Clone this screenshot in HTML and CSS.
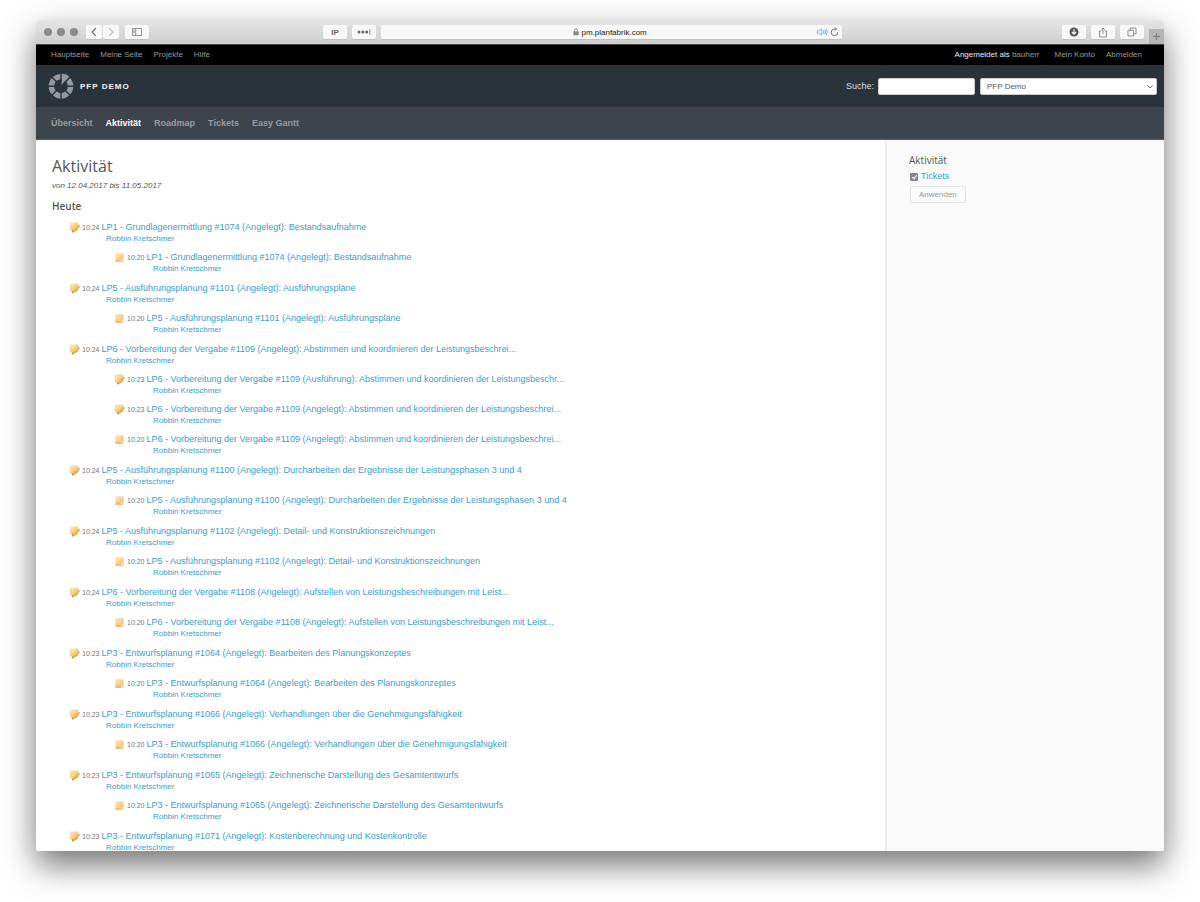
FILE: index.html
```
<!DOCTYPE html>
<html lang="de">
<head>
    <meta charset="UTF-8">
    <meta name="viewport" content="width=device-width, initial-scale=1.0">
    <title>Aktivität - PFP Demo</title>
    <link rel="stylesheet" href="styles.css">
</head>
<body>
    <svg class="sprite" aria-hidden="true">
        <linearGradient id="note-fill" x1="0" y1="0" x2="1" y2="1">
            <stop offset="0" stop-color="#fdebc0"/>
            <stop offset="1" stop-color="#f2b85a"/>
        </linearGradient>
        <symbol id="icon-note" viewBox="0 0 11 11">
            <rect x="1.2" y="1.2" width="8.4" height="8.6" rx="0.8" fill="url(#note-fill)"/>
            <path d="M1.4 8.4h5.6v1.2H1.4z" fill="#eeae5a"/>
            <path d="M7 9.6V7.6l2.4-.4z" fill="#fdf0d8"/>
        </symbol>
        <symbol id="icon-note-edit" viewBox="0 0 11 11">
            <path d="M.6.6h8.6v6.6L7.6 8.8H2L.6 7.2z" fill="url(#note-fill)"/>
            <path d="M9.4 2.6l1.2 1.2-5.2 5.4-2.4.6.7-2.2z" fill="#f0c04e"/>
            <path d="M10.6 4L5.6 9.3l-2.4.8" fill="none" stroke="#c48e4e" stroke-width=".8"/>
            <path d="M3 8l.2 2.4 1.8-.8z" fill="#c08a50"/>
            <path d="M9.2 2.6l1.4 1.4" stroke="#e8b29a" stroke-width="1"/>
        </symbol>
    </svg>

    <div class="window">
        <div class="toolbar">
            <div class="lights"><span></span><span></span><span></span></div>
            <div class="history">
                <button class="tool" aria-label="Zurück"><svg width="8" height="10" viewBox="0 0 8 10"><path d="M5.8 1.2L2 5l3.8 3.8" fill="none" stroke="#666" stroke-width="1.1"/></svg></button>
                <button class="tool" aria-label="Vorwärts"><svg width="8" height="10" viewBox="0 0 8 10"><path d="M2.2 1.2L6 5 2.2 8.8" fill="none" stroke="#bbb" stroke-width="1.1"/></svg></button>
            </div>
            <button class="tool tool-wide" aria-label="Seitenleiste"><svg width="10" height="8" viewBox="0 0 10 8"><path d="M.5.5h9v7h-9zM3.7.5v7M1.3 2h1.4M1.3 3.4h1.4M1.3 4.8h1.4" fill="none" stroke="#777" stroke-width=".8"/></svg></button>
            <div class="extensions">
                <button class="tool tool-wide">IP</button>
                <button class="tool tool-wide" aria-label="Passwort"><svg width="14" height="8" viewBox="0 0 14 8"><circle cx="2" cy="4" r="1.5" fill="#666"/><circle cx="5.9" cy="4" r="1.5" fill="#666"/><circle cx="9.8" cy="4" r="1.5" fill="#666"/><path d="M12.8 1v6" stroke="#777" stroke-width=".8"/></svg></button>
            </div>
            <div class="address">
                <span class="url"><svg width="6" height="8" viewBox="0 0 6 8"><rect x=".3" y="3.2" width="5.4" height="4" rx=".5" fill="#888"/><path d="M1.5 3.4V2.3a1.5 1.5 0 013 0v1.1" fill="none" stroke="#888" stroke-width=".9"/></svg> pm.planfabrik.com</span>
                <svg width="11" height="8" viewBox="0 0 11 8"><path d="M.6 2.8h1.6L4.8.9v6.2L2.2 5.2H.6z" fill="none" stroke="#5aa5f0" stroke-width=".8"/><path d="M6.3 2.5q1 1.5 0 3M7.8 1.7q1.6 2.3 0 4.6M9.2.9q2.2 3.1 0 6.2" fill="none" stroke="#5aa5f0" stroke-width=".8"/></svg>
                <svg width="9" height="10" viewBox="0 0 9 10"><path d="M7.8 5.2A3.3 3.3 0 114.5 2H6" fill="none" stroke="#666" stroke-width=".9"/><path d="M4.6.2L6.6 2 4.6 3.8" fill="none" stroke="#666" stroke-width=".9"/></svg>
            </div>
            <div class="actions">
                <button class="tool tool-wide" aria-label="Downloads"><svg width="10" height="10" viewBox="0 0 10 10"><circle cx="5" cy="5" r="4.5" fill="#555"/><path d="M5 2.2v4.6M2.9 5L5 7.2 7.1 5" fill="none" stroke="#fff" stroke-width="1.1"/></svg></button>
                <button class="tool tool-wide" aria-label="Teilen"><svg width="10" height="11" viewBox="0 0 10 11"><path d="M3.4 4H1.5v6h7V4H6.6M5 7V1M3.2 2.8L5 1l1.8 1.8" fill="none" stroke="#777" stroke-width=".8"/></svg></button>
                <button class="tool tool-wide" aria-label="Tabs"><svg width="10" height="10" viewBox="0 0 10 10"><path d="M1 3.3h5.6V9H1zM3.2 3.3V1H9v5.8H6.6" fill="none" stroke="#777" stroke-width=".8"/></svg></button>
            </div>
            <button class="new-tab" aria-label="Neuer Tab"><svg width="9" height="9" viewBox="0 0 9 9"><path d="M4.5 1v7M1 4.5h7" stroke="#777" stroke-width=".9"/></svg></button>
        </div>

        <div class="top-menu">
            <a href="#">Hauptseite</a>
            <a href="#">Meine Seite</a>
            <a href="#">Projekte</a>
            <a href="#">Hilfe</a>
            <span class="logged-as">Angemeldet als <a href="#">bauherr</a></span>
            <a href="#">Mein Konto</a>
            <a href="#">Abmelden</a>
        </div>

        <div class="header">
            <svg class="logo" width="26" height="26" viewBox="0 0 26 26">
                <circle cx="13" cy="13.2" r="9.6" fill="none" stroke="#93999e" stroke-width="5.4"/>
                <path d="M13.6 12V.4q4.4 0 7.2 2.7z" fill="#93999e"/>
                <path d="M13 0v8M13 19v7M0 13.2h7.5M18.5 13.2H26M3.8 4l5 5M22.2 22.4l-4.8-4.8M3.8 22.4l4.8-4.8M22.6 3.6l-5 5.2" stroke="#29343a" stroke-width="1.4"/>
            </svg>
            <h1>PFP DEMO</h1>
            <label for="search">Suche:</label>
            <input class="search" id="search" type="text">
            <div class="project">
                <select aria-label="Projekt">
                    <option>PFP Demo</option>
                </select>
                <svg class="arrow" width="8" height="6" viewBox="0 0 8 6"><path d="M1.4 1.4L4 4l2.6-2.6" fill="none" stroke="#777" stroke-width="1"/></svg>
            </div>
        </div>

        <div class="main-menu">
            <a href="#">Übersicht</a>
            <a href="#" class="selected">Aktivität</a>
            <a href="#">Roadmap</a>
            <a href="#">Tickets</a>
            <a href="#">Easy Gantt</a>
        </div>

        <div class="main">
            <div class="content">
                <h2>Aktivität</h2>
                <p class="subtitle">von 12.04.2017 bis 11.05.2017</p>
                <h3>Heute</h3>
                <dl>
                    <dt><svg class="icon"><use href="#icon-note-edit"/></svg><span class="time">10:24</span><a href="#">LP1 - Grundlagenermittlung #1074 (Angelegt): Bestandsaufnahme</a></dt>
                    <dd><a href="#">Robbin Kretschmer</a></dd>
                    <dt class="grouped"><svg class="icon"><use href="#icon-note"/></svg><span class="time">10:20</span><a href="#">LP1 - Grundlagenermittlung #1074 (Angelegt): Bestandsaufnahme</a></dt>
                    <dd class="grouped"><a href="#">Robbin Kretschmer</a></dd>

                    <dt><svg class="icon"><use href="#icon-note-edit"/></svg><span class="time">10:24</span><a href="#">LP5 - Ausführungsplanung #1101 (Angelegt): Ausführungspläne</a></dt>
                    <dd><a href="#">Robbin Kretschmer</a></dd>
                    <dt class="grouped"><svg class="icon"><use href="#icon-note"/></svg><span class="time">10:20</span><a href="#">LP5 - Ausführungsplanung #1101 (Angelegt): Ausführungspläne</a></dt>
                    <dd class="grouped"><a href="#">Robbin Kretschmer</a></dd>

                    <dt><svg class="icon"><use href="#icon-note-edit"/></svg><span class="time">10:24</span><a href="#">LP6 - Vorbereitung der Vergabe #1109 (Angelegt): Abstimmen und koordinieren der Leistungsbeschrei...</a></dt>
                    <dd><a href="#">Robbin Kretschmer</a></dd>
                    <dt class="grouped"><svg class="icon"><use href="#icon-note-edit"/></svg><span class="time">10:23</span><a href="#">LP6 - Vorbereitung der Vergabe #1109 (Ausführung): Abstimmen und koordinieren der Leistungsbeschr...</a></dt>
                    <dd class="grouped"><a href="#">Robbin Kretschmer</a></dd>
                    <dt class="grouped"><svg class="icon"><use href="#icon-note-edit"/></svg><span class="time">10:23</span><a href="#">LP6 - Vorbereitung der Vergabe #1109 (Angelegt): Abstimmen und koordinieren der Leistungsbeschrei...</a></dt>
                    <dd class="grouped"><a href="#">Robbin Kretschmer</a></dd>
                    <dt class="grouped"><svg class="icon"><use href="#icon-note"/></svg><span class="time">10:20</span><a href="#">LP6 - Vorbereitung der Vergabe #1109 (Angelegt): Abstimmen und koordinieren der Leistungsbeschrei...</a></dt>
                    <dd class="grouped"><a href="#">Robbin Kretschmer</a></dd>

                    <dt><svg class="icon"><use href="#icon-note-edit"/></svg><span class="time">10:24</span><a href="#">LP5 - Ausführungsplanung #1100 (Angelegt): Durcharbeiten der Ergebnisse der Leistungsphasen 3 und 4</a></dt>
                    <dd><a href="#">Robbin Kretschmer</a></dd>
                    <dt class="grouped"><svg class="icon"><use href="#icon-note"/></svg><span class="time">10:20</span><a href="#">LP5 - Ausführungsplanung #1100 (Angelegt): Durcharbeiten der Ergebnisse der Leistungsphasen 3 und 4</a></dt>
                    <dd class="grouped"><a href="#">Robbin Kretschmer</a></dd>

                    <dt><svg class="icon"><use href="#icon-note-edit"/></svg><span class="time">10:24</span><a href="#">LP5 - Ausführungsplanung #1102 (Angelegt): Detail- und Konstruktionszeichnungen</a></dt>
                    <dd><a href="#">Robbin Kretschmer</a></dd>
                    <dt class="grouped"><svg class="icon"><use href="#icon-note"/></svg><span class="time">10:20</span><a href="#">LP5 - Ausführungsplanung #1102 (Angelegt): Detail- und Konstruktionszeichnungen</a></dt>
                    <dd class="grouped"><a href="#">Robbin Kretschmer</a></dd>

                    <dt><svg class="icon"><use href="#icon-note-edit"/></svg><span class="time">10:24</span><a href="#">LP6 - Vorbereitung der Vergabe #1108 (Angelegt): Aufstellen von Leistungsbeschreibungen mit Leist...</a></dt>
                    <dd><a href="#">Robbin Kretschmer</a></dd>
                    <dt class="grouped"><svg class="icon"><use href="#icon-note"/></svg><span class="time">10:20</span><a href="#">LP6 - Vorbereitung der Vergabe #1108 (Angelegt): Aufstellen von Leistungsbeschreibungen mit Leist...</a></dt>
                    <dd class="grouped"><a href="#">Robbin Kretschmer</a></dd>

                    <dt><svg class="icon"><use href="#icon-note-edit"/></svg><span class="time">10:23</span><a href="#">LP3 - Entwurfsplanung #1064 (Angelegt): Bearbeiten des Planungskonzeptes</a></dt>
                    <dd><a href="#">Robbin Kretschmer</a></dd>
                    <dt class="grouped"><svg class="icon"><use href="#icon-note"/></svg><span class="time">10:20</span><a href="#">LP3 - Entwurfsplanung #1064 (Angelegt): Bearbeiten des Planungskonzeptes</a></dt>
                    <dd class="grouped"><a href="#">Robbin Kretschmer</a></dd>

                    <dt><svg class="icon"><use href="#icon-note-edit"/></svg><span class="time">10:23</span><a href="#">LP3 - Entwurfsplanung #1066 (Angelegt): Verhandlungen über die Genehmigungsfähigkeit</a></dt>
                    <dd><a href="#">Robbin Kretschmer</a></dd>
                    <dt class="grouped"><svg class="icon"><use href="#icon-note"/></svg><span class="time">10:20</span><a href="#">LP3 - Entwurfsplanung #1066 (Angelegt): Verhandlungen über die Genehmigungsfähigkeit</a></dt>
                    <dd class="grouped"><a href="#">Robbin Kretschmer</a></dd>

                    <dt><svg class="icon"><use href="#icon-note-edit"/></svg><span class="time">10:23</span><a href="#">LP3 - Entwurfsplanung #1065 (Angelegt): Zeichnerische Darstellung des Gesamtentwurfs</a></dt>
                    <dd><a href="#">Robbin Kretschmer</a></dd>
                    <dt class="grouped"><svg class="icon"><use href="#icon-note"/></svg><span class="time">10:20</span><a href="#">LP3 - Entwurfsplanung #1065 (Angelegt): Zeichnerische Darstellung des Gesamtentwurfs</a></dt>
                    <dd class="grouped"><a href="#">Robbin Kretschmer</a></dd>

                    <dt><svg class="icon"><use href="#icon-note-edit"/></svg><span class="time">10:23</span><a href="#">LP3 - Entwurfsplanung #1071 (Angelegt): Kostenberechnung und Kostenkontrolle</a></dt>
                    <dd><a href="#">Robbin Kretschmer</a></dd>
                </dl>
            </div>

            <form class="sidebar">
                <h3>Aktivität</h3>
                <div class="filter">
                    <input type="checkbox" id="show_issues" aria-label="Tickets" checked>
                    <a href="#">Tickets</a>
                </div>
                <button class="apply" type="button">Anwenden</button>
            </form>
        </div>
    </div>
</body>
</html>
```
FILE: styles.css
```
* {
    box-sizing: border-box;
}
body {
    margin: 0;
    height: 100vh;
    padding: 20px 36px 51px;
    background: #fff;
    color: #555;
    font-family: "Helvetica Neue", "Liberation Sans", Arial, sans-serif;
    font-size: 9px;
    line-height: 11px;
}
a {
    color: #3b9dd2;
    text-decoration: none;
}
a:hover {
    text-decoration: underline;
}
h1, h2, h3, p, dl, dd {
    margin: 0;
}
button, input, select {
    font-family: inherit;
    margin: 0;
}
.sprite {
    position: absolute;
    width: 0;
    height: 0;
}
.window {
    display: flex;
    flex-direction: column;
    height: 100%;
    overflow: hidden;
    background: #fff;
    border-radius: 4px 4px 2px 2px;
    box-shadow: 0 14px 32px rgba(0, 0, 0, 0.55);
}

/* Browser toolbar */
.toolbar {
    display: flex;
    flex: none;
    align-items: center;
    height: 24px;
    padding-left: 8px;
    background: linear-gradient(to bottom, #e6e6e6, #cdcdcd);
}
.lights {
    display: flex;
    gap: 5px;
    margin-right: 8px;
}
.lights span {
    width: 8px;
    height: 8px;
    border-radius: 50%;
    background: #8b8a8d;
}
.history {
    display: flex;
    gap: 1px;
    margin-right: 6px;
}
.tool {
    display: flex;
    align-items: center;
    justify-content: center;
    width: 16px;
    height: 14px;
    padding: 0;
    border: 0;
    border-radius: 2px;
    background: #f8f8f8;
    box-shadow: 0 1px 0 rgba(0, 0, 0, 0.08);
    color: #666;
    font-size: 8px;
    font-weight: bold;
}
.tool-wide {
    width: 24px;
}
.extensions {
    display: flex;
    gap: 5px;
    margin-left: 174px;
}
.address {
    display: flex;
    flex: 0 1 461px;
    align-items: center;
    gap: 2px;
    height: 14px;
    margin: 0 5px;
    padding-right: 3px;
    border-radius: 2px;
    background: #f8f8f8;
    box-shadow: 0 1px 0 rgba(0, 0, 0, 0.08);
}
.url {
    flex: 1;
    padding-left: 24px;
    color: #222;
    font-size: 8px;
    text-align: center;
}
.url svg {
    vertical-align: -1px;
}
.actions {
    display: flex;
    gap: 5px;
    margin-left: auto;
}
.new-tab {
    display: flex;
    align-self: flex-end;
    align-items: center;
    justify-content: center;
    width: 15px;
    height: 15px;
    margin-left: 5px;
    padding: 0;
    border: 0;
    background: #b4b4b4;
}

/* Page header */
.top-menu {
    display: flex;
    flex: none;
    align-items: center;
    gap: 11px;
    height: 21px;
    padding: 0 22px 2px 15px;
    border-top: 1px solid #444;
    background: #000;
    color: #eee;
    font-size: 8px;
}
.top-menu a {
    color: #999;
}
.logged-as {
    margin-left: auto;
    margin-right: 4px;
}
.header {
    display: flex;
    flex: none;
    align-items: center;
    height: 42px;
    padding: 0 7px 0 12px;
    background: #29343a;
    color: #ddd;
}
.header h1 {
    margin-left: 6px;
    margin-right: auto;
    color: #f4f4f4;
    font-size: 8px;
    letter-spacing: 1px;
}
.search {
    width: 97px;
    height: 17px;
    margin: 0 5px 0 4px;
    border: 1px solid #ccc;
    border-radius: 2px;
    background: #fff;
}
.project {
    position: relative;
    width: 177px;
}
.project select {
    display: block;
    width: 100%;
    height: 17px;
    padding: 0 6px;
    border: 1px solid #ccc;
    border-radius: 2px;
    appearance: none;
    background: #fff;
    color: #555;
    font-size: 8px;
}
.arrow {
    position: absolute;
    top: 6px;
    right: 3px;
    pointer-events: none;
}
.main-menu {
    display: flex;
    flex: none;
    align-items: center;
    gap: 13px;
    height: 33px;
    padding: 0 15px;
    border-bottom: 1px solid #59626b;
    background: #3d444b;
    font-weight: bold;
}
.main-menu a {
    color: #999ca0;
}
.main-menu .selected {
    color: #fff;
}

/* Activity list */
.main {
    display: flex;
    flex: 1;
    min-height: 0;
    border-top: 1px solid #eee;
}
.content {
    flex: 1;
    padding: 15px 16px 0;
    overflow: hidden;
}
h2, h3 {
    font-family: "Trebuchet MS", "Open Sans", sans-serif;
}
h2 {
    font-size: 16px;
    font-weight: normal;
    line-height: 20px;
}
.subtitle {
    margin-top: 4px;
    font-size: 8px;
    font-style: italic;
}
h3 {
    margin-top: 8px;
    font-size: 10px;
    font-weight: 600;
    line-height: 14px;
}
dl {
    padding-left: 17px;
    white-space: nowrap;
}
dt {
    display: flex;
    align-items: center;
    height: 11px;
    margin-top: 9px;
}
dt.grouped {
    margin: 8px 0 0 45px;
}
dd {
    padding-left: 37px;
    font-size: 8px;
}
dd.grouped {
    padding-left: 84px;
}
.icon {
    width: 11px;
    height: 11px;
    margin-right: 2px;
}
.time {
    margin-right: 2px;
    color: #777;
    font-size: 7px;
}

/* Sidebar */
.sidebar {
    flex: none;
    width: 279px;
    padding: 12px 22px;
    border-left: 2px solid #eee;
    background: #fafafa;
}
.sidebar h3 {
    margin: 0;
    font-weight: normal;
}
.filter {
    display: flex;
    align-items: center;
    gap: 3px;
    margin-top: 4px;
    padding-left: 1px;
}
.filter input {
    display: flex;
    align-items: center;
    justify-content: center;
    width: 8px;
    height: 8px;
    border-radius: 1px;
    appearance: none;
    background: #85858a;
}
.filter input:checked::after {
    content: "";
    width: 2px;
    height: 4px;
    border: solid #fff;
    border-width: 0 1px 1px 0;
    transform: rotate(40deg);
}
.apply {
    height: 17px;
    margin: 4px 0 0 1px;
    padding: 0 8px;
    border: 1px solid #e4e4e4;
    border-radius: 2px;
    background: #fcfcfc;
    color: #999;
    font-size: 8px;
}
```
